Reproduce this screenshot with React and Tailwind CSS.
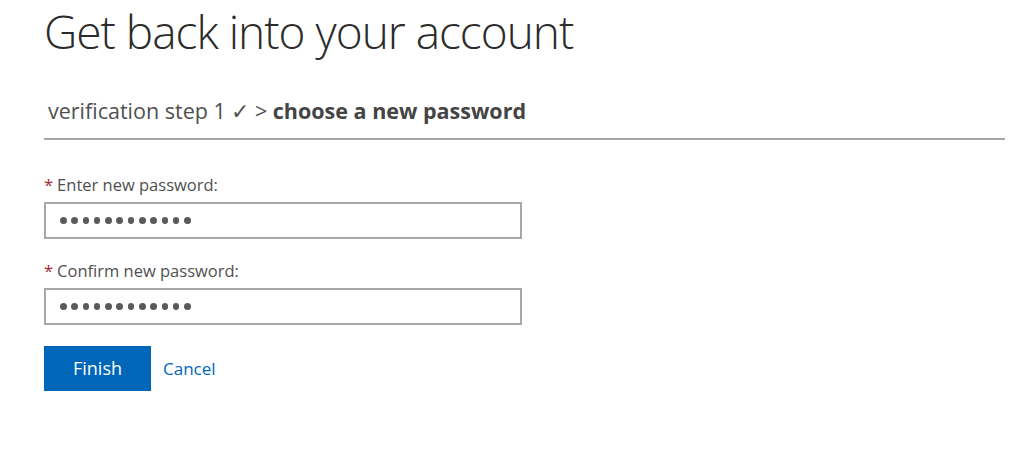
export default function App() {
  const dots = Array.from({ length: 12 })

  function PasswordField({ label }) {
    return (
      <div>
        <label className="block text-[16.5px] leading-[22px] text-[#505050]">
          <span className="text-[#a4262c] mr-[4px]">*</span>
          {label}
        </label>
        <div className="mt-[6px] w-[478px] h-[37px] border-2 border-[#a8a8a8] bg-white flex items-center pl-[14px] gap-[4.8px]">
          {dots.map((_, i) => (
            <span key={i} className="block w-[6.5px] h-[6.5px] rounded-full bg-[#5a5a5a]" />
          ))}
        </div>
      </div>
    )
  }

  return (
    <div
      className="w-[1024px] h-[461px] bg-white pl-[44px] pr-[19px] overflow-hidden"
      style={{ fontFamily: '"Open Sans", "Noto Sans", "Liberation Sans", sans-serif' }}
    >
      <h1 className="pt-[4px] text-[46px] leading-[1.2] font-light text-[#2b2b2b] tracking-[-1px]">
        Get back into your account
      </h1>

      <div className="mt-[38px] pl-[4px] text-[21.5px] leading-[28px] text-[#505050]">
        verification step 1 ✓ &gt; <span className="font-bold text-[#444]">choose a new password</span>
      </div>

      <div className="mt-[13px] h-[2px] bg-[#a6a6a6]" />

      <form className="mt-[34px] flex flex-col gap-[21px]" onSubmit={(e) => e.preventDefault()}>
        <PasswordField label="Enter new password:" />
        <PasswordField label="Confirm new password:" />

        <div className="flex items-center gap-[12px]">
          <button
            type="submit"
            className="w-[107px] h-[45px] bg-[#0067b8] text-white text-[18px]"
          >
            Finish
          </button>
          <a href="#" className="text-[17px] text-[#0067b8]">
            Cancel
          </a>
        </div>
      </form>
    </div>
  )
}
